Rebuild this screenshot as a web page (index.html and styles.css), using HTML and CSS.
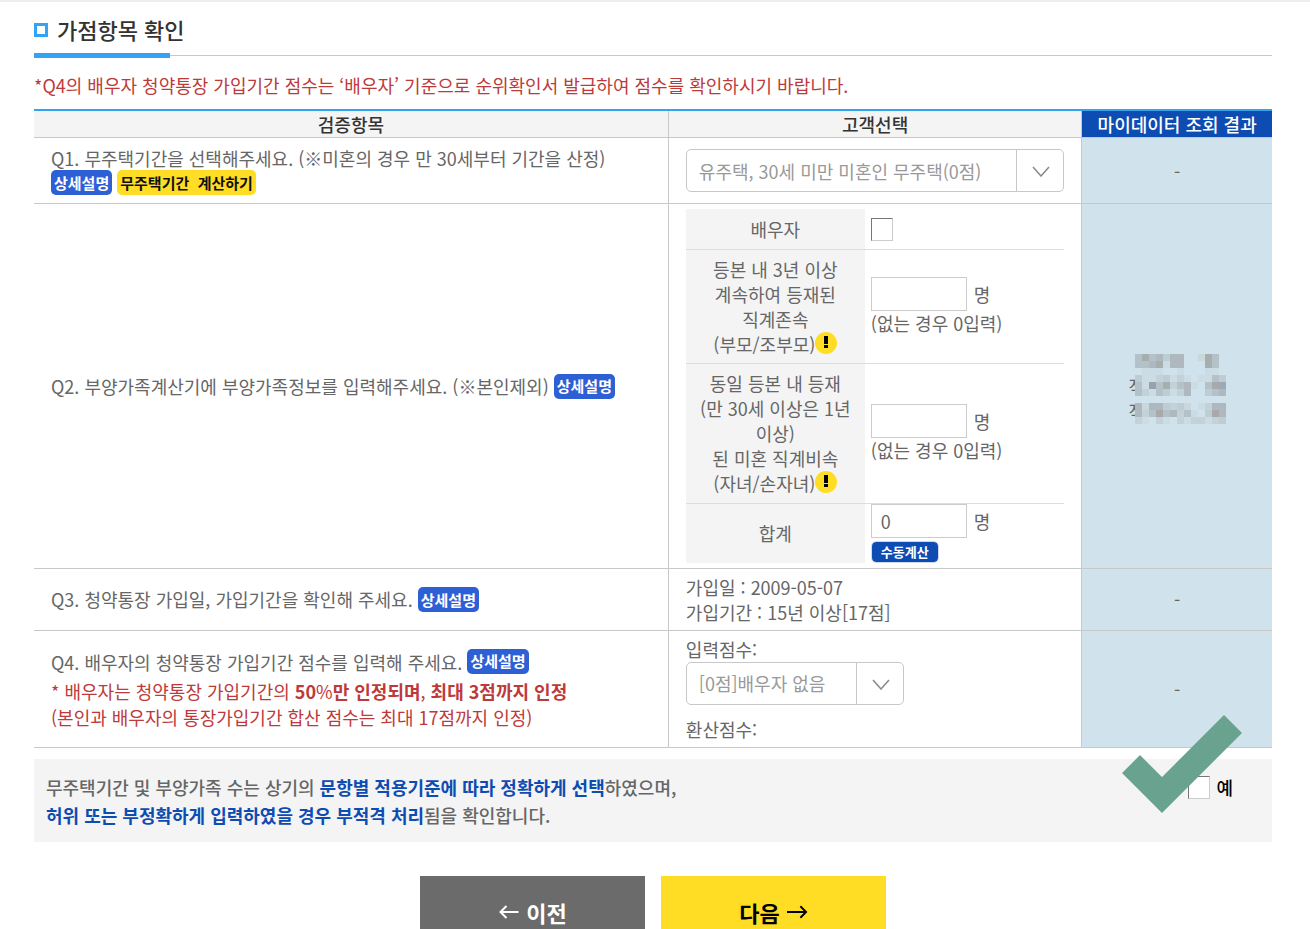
FILE: index.html
```html
<!DOCTYPE html>
<html lang="ko">
<head>
  <meta charset="UTF-8">
  <title>가점항목 확인</title>
  <meta name="viewport" content="width=device-width, initial-scale=1.0">
  <link rel="stylesheet" href="styles.css">
</head>
<body>
  <main class="container">
    <h2 class="title">가점항목 확인</h2>
    <p class="notice">*Q4의 배우자 청약통장 가입기간 점수는 ‘배우자’ 기준으로 순위확인서 발급하여 점수를 확인하시기 바랍니다.</p>

    <table class="score-table">
      <colgroup>
        <col class="col-item">
        <col class="col-choice">
        <col class="col-result">
      </colgroup>
      <thead>
        <tr>
          <th scope="col">검증항목</th>
          <th scope="col">고객선택</th>
          <th scope="col" class="mydata">마이데이터 조회 결과</th>
        </tr>
      </thead>
      <tbody>
        <tr class="row-q1">
          <td>
            <label for="homeless">Q1. 무주택기간을 선택해주세요. (※미혼의 경우 만 30세부터 기간을 산정)</label><br>
            <button type="button" class="badge">상세설명</button>
            <button type="button" class="badge badge-calc">무주택기간&nbsp; 계산하기</button>
          </td>
          <td>
            <div class="select-box">
              <select id="homeless">
                <option>유주택, 30세 미만 미혼인 무주택(0점)</option>
              </select>
              <svg class="arrow" viewBox="0 0 18 11" aria-hidden="true"><path d="M1 1l8 9L17 1"/></svg>
            </div>
          </td>
          <td class="result">-</td>
        </tr>

        <tr class="row-q2">
          <td>
            Q2. 부양가족계산기에 부양가족정보를 입력해주세요. (※본인제외)
            <button type="button" class="badge">상세설명</button>
          </td>
          <td class="family-cell">
            <table class="family">
              <tr class="row-spouse">
                <th scope="row"><label for="spouse">배우자</label></th>
                <td><input type="checkbox" id="spouse" class="check"></td>
              </tr>
              <tr class="row-parents">
                <th scope="row">
                  <label for="parents">등본 내 3년 이상<br>계속하여 등재된<br>직계존속<br>(부모/조부모)</label><svg class="info" viewBox="0 0 22 22" aria-hidden="true"><circle cx="11" cy="11" r="11"/><path d="M9 4h4v8H9zM9 13h4v3H9z"/></svg>
                </th>
                <td>
                  <div class="count"><input type="text" id="parents"><span>명</span></div>
                  (없는 경우 0입력)
                </td>
              </tr>
              <tr class="row-children">
                <th scope="row">
                  <label for="children">동일 등본 내 등재<br>(만 30세 이상은 1년 이상)<br>된 미혼 직계비속<br>(자녀/손자녀)</label><svg class="info" viewBox="0 0 22 22" aria-hidden="true"><circle cx="11" cy="11" r="11"/><path d="M9 4h4v8H9zM9 13h4v3H9z"/></svg>
                </th>
                <td>
                  <div class="count"><input type="text" id="children"><span>명</span></div>
                  (없는 경우 0입력)
                </td>
              </tr>
              <tr class="row-total">
                <th scope="row"><label for="total">합계</label></th>
                <td>
                  <div class="count"><input type="text" id="total" value="0"><span>명</span></div>
                  <button type="button" class="manual">수동계산</button>
                </td>
              </tr>
            </table>
          </td>
          <td class="result">
            <div class="masked">
              <br>직<br>직
              <svg class="mosaic" viewBox="0 0 13 10" shape-rendering="crispEdges" aria-hidden="true"></svg>
            </div>
          </td>
        </tr>

        <tr class="row-q3">
          <td>
            Q3. 청약통장 가입일, 가입기간을 확인해 주세요.
            <button type="button" class="badge">상세설명</button>
          </td>
          <td>가입일 : 2009-05-07<br>가입기간 : 15년 이상[17점]</td>
          <td class="result">-</td>
        </tr>

        <tr class="row-q4">
          <td>
            <p class="question">
              Q4. 배우자의 청약통장 가입기간 점수를 입력해 주세요.
              <button type="button" class="badge">상세설명</button>
            </p>
            <p class="warn">* 배우자는 청약통장 가입기간의 <b>50</b>%<b>만 인정되며</b>, <b>최대 3점까지 인정</b></p>
            <p class="warn">(본인과 배우자의 통장가입기간 합산 점수는 최대 17점까지 인정)</p>
          </td>
          <td>
            <label for="spouseScore">입력점수:</label>
            <div class="select-box select-short">
              <select id="spouseScore">
                <option>[0점]배우자 없음</option>
              </select>
              <svg class="arrow" viewBox="0 0 18 11" aria-hidden="true"><path d="M1 1l8 9L17 1"/></svg>
            </div>
            <p>환산점수:</p>
          </td>
          <td class="result">-</td>
        </tr>
      </tbody>
    </table>

    <div class="confirm">
      <p>무주택기간 및 부양가족 수는 상기의 <b>문항별 적용기준에 따라 정확하게 선택</b>하였으며,<br>
      <b>허위 또는 부정확하게 입력하였을 경우 부적격 처리</b>됨을 확인합니다.</p>
      <label class="agree"><input type="checkbox" class="check">예</label>
      <svg class="big-check" viewBox="0 0 120 98" aria-hidden="true"><path d="M0 58L18 40L40 62L102 0L120 18L40 98z"/></svg>
    </div>

    <div class="buttons">
      <button type="button" class="btn btn-prev">
        <svg viewBox="0 0 20 14" aria-hidden="true"><path d="M20 7H2M8 1L2 7l6 6"/></svg>
        이전
      </button>
      <button type="button" class="btn btn-next">
        다음
        <svg viewBox="0 0 22 14" aria-hidden="true"><path d="M0 7h20M14 1l6 6l-6 6"/></svg>
      </button>
    </div>
  </main>

  <script src="mosaic.js"></script>
</body>
</html>
```
FILE: styles.css
```css
*, *::before, *::after {
  box-sizing: border-box;
}

body {
  margin: 0;
  border-top: 2px solid #eee;
  background: #fff;
  color: #666;
  font-family: 'Noto Sans CJK KR', 'Noto Sans', sans-serif;
  font-size: 18px;
  line-height: 25px;
  word-break: keep-all;
  height: 100vh;
  overflow: hidden;
}

p {
  margin: 0;
}

button, input, select {
  font-family: inherit;
  margin: 0;
}

.container {
  padding: 0 38px 0 34px;
}

.title {
  position: relative;
  display: flex;
  align-items: center;
  gap: 9px;
  margin: 0 0 17px;
  padding-top: 2px;
  height: 54px;
  border-bottom: 1px solid #c8c8c8;
  color: #333;
  font-size: 22px;
  font-weight: 500;
}

.title::before {
  content: '';
  width: 14px;
  height: 14px;
  border: 3px solid #33a3f4;
}

.title::after {
  content: '';
  position: absolute;
  left: 0;
  bottom: -3px;
  width: 136px;
  height: 5px;
  background: #33a3f4;
}

.notice {
  margin-bottom: 11px;
  color: #be3a3a;
}

.score-table {
  width: 100%;
  table-layout: fixed;
  border-collapse: separate;
  border-spacing: 0;
  border-top: 2px solid #33a3f4;
}

.col-item {
  width: 51.200%;
}

.col-choice {
  width: 33.400%;
}

.score-table > thead th {
  height: 27px;
  padding: 0;
  background: #f4f4f4;
  border-bottom: 1px solid #c8c8c8;
  color: #333;
  font-weight: 500;
}

.score-table > tbody > tr > td {
  padding: 5px 17px;
  border-bottom: 1px solid #c8c8c8;
}

.score-table > thead th + th,
.score-table > tbody > tr > td + td {
  border-left: 1px solid #c8c8c8;
}

.score-table > thead .mydata {
  background: #0d4cb3;
  color: #fff;
}

.score-table .result {
  background: #d0e2ec;
  text-align: center;
}

.row-q1 {
  height: 66px;
  line-height: 24px;
}

.row-q3 {
  height: 62px;
}

.row-q4 {
  height: 117px;
}

.badge {
  height: 25px;
  padding: 0 3px;
  border: 0;
  border-radius: 5px;
  background: #2d5fd5;
  color: #fff;
  font-size: 15px;
  font-weight: 700;
  line-height: 24px;
  vertical-align: top;
}

.badge-calc {
  background: #ffdd25;
  color: #111;
}

/* selects */
.select-box {
  position: relative;
}

.select-short {
  width: 218px;
  margin-bottom: 12px;
}

.select-box select {
  appearance: none;
  display: block;
  width: 100%;
  height: 43px;
  padding: 0 12px;
  border: 1px solid #c8c8c8;
  border-radius: 5px;
  background: linear-gradient(#c8c8c8, #c8c8c8) right 46px top / 1px 100% no-repeat #fff;
  color: #999;
  font-size: 18px;
}

.arrow {
  position: absolute;
  top: 17px;
  right: 14px;
  width: 18px;
  height: 11px;
  fill: none;
  stroke: #888;
  stroke-width: 1.500;
  pointer-events: none;
}

/* family calculator */
.family {
  width: 100%;
  border-collapse: separate;
  border-spacing: 0;
}

.family th {
  width: 179px;
  padding: 0;
  background: #f4f4f4;
  font-weight: 400;
}

.family td {
  padding: 0 6px;
}

.family tr + tr th,
.family tr + tr td {
  border-top: 1px solid #ddd;
}

.row-spouse {
  height: 40px;
}

.row-parents {
  height: 114px;
}

.row-children {
  height: 140px;
}

.row-total {
  height: 60px;
}

.info {
  width: 22px;
  height: 22px;
  margin-top: -4px;
  vertical-align: -2px;
}

.info circle {
  fill: #ffdd25;
}

.info path {
  fill: #000;
}

.check {
  appearance: none;
  display: block;
  width: 22px;
  height: 23px;
  border: 1px solid;
  border-color: #767676 #ccc #ccc #767676;
  background: #fff;
}

.count {
  display: flex;
  align-items: center;
  gap: 7px;
}

.count input {
  width: 96px;
  height: 34px;
  padding: 0 9px;
  border: 1px solid #ccc;
  color: #666;
  font-size: 18px;
}

.manual {
  display: block;
  height: 22px;
  margin-top: 3px;
  padding: 0 9px;
  border: 1px solid #d0d8e8;
  border-radius: 5px;
  background: #0d4cb3;
  background-clip: padding-box;
  color: #fff;
  font-size: 13px;
  font-weight: 700;
  line-height: 18px;
}

/* masked result */
.masked {
  position: relative;
  width: 98px;
  margin: 0 auto;
  text-align: left;
}

.mosaic {
  position: absolute;
  top: 5px;
  left: 7px;
  width: 91px;
  height: 70px;
}

.question {
  margin-bottom: 3px;
  line-height: 26px;
}

.warn {
  color: #be3a3a;
  line-height: 26px;
}

/* confirm */
.confirm {
  position: relative;
  display: flex;
  justify-content: space-between;
  align-items: flex-start;
  margin-top: 11px;
  padding: 14px 39px 13px 12px;
  background: #f4f4f4;
  font-weight: 500;
  line-height: 28px;
}

.confirm b {
  color: #0d4cb3;
}

.agree {
  display: flex;
  align-items: center;
  gap: 6px;
  color: #000;
}

.big-check {
  position: absolute;
  top: -44px;
  right: 30px;
  width: 120px;
  height: 98px;
  fill: #69a38f;
  pointer-events: none;
}

.buttons {
  display: flex;
  justify-content: center;
  gap: 16px;
  margin-top: 34px;
}

.btn {
  display: flex;
  justify-content: center;
  align-items: center;
  gap: 7px;
  width: 225px;
  height: 72px;
  border: 0;
  font-size: 22px;
  font-weight: 700;
}

.btn svg {
  width: 21px;
  height: 14px;
  fill: none;
  stroke: currentColor;
  stroke-width: 2;
}

.btn-prev {
  background: #6b6b6b;
  color: #fff;
}

.btn-next {
  background: #ffdd25;
  color: #000;
}
```
FILE: mosaic.js
```js
// 조회 결과 모자이크 (13 x 10 칸, '.' 은 빈 칸)
var colors = {
  a: '#c3d2d9', b: '#b3c1c8', c: '#a6afae', d: '#aeb8be', e: '#97a2ad',
  f: '#cbdce5', g: '#c9d9db', h: '#9caab7', i: '#a9a9ac', j: '#bccdd5'
};

var rows = [
  'bcbdjdd..gcb.',
  'bbdcfdd...cb.',
  '.fff..f...ff.',
  'jffajfaf.ffbj',
  'bfebcabdf.bih',
  'bafbjfad..jbd',
  '.............',
  'dgddjajg.fadd',
  'dabibdabf.jid',
  'af.af.afaafaj'
];

var svg = document.querySelector('.mosaic');

function addCell(x, y, width, height, color) {
  var rect = document.createElementNS('http://www.w3.org/2000/svg', 'rect');
  rect.setAttribute('x', x);
  rect.setAttribute('y', y);
  rect.setAttribute('width', width);
  rect.setAttribute('height', height);
  rect.setAttribute('fill', color);
  svg.appendChild(rect);
}

// 글자가 비치지 않도록 바탕을 먼저 채운다
addCell(0, 0, 13, 10, '#d0e2ec');

for (var y = 0; y < rows.length; y++) {
  for (var x = 0; x < rows[y].length; x++) {
    var color = colors[rows[y][x]];
    if (color) {
      addCell(x, y, 1, 1, color);
    }
  }
}
```
